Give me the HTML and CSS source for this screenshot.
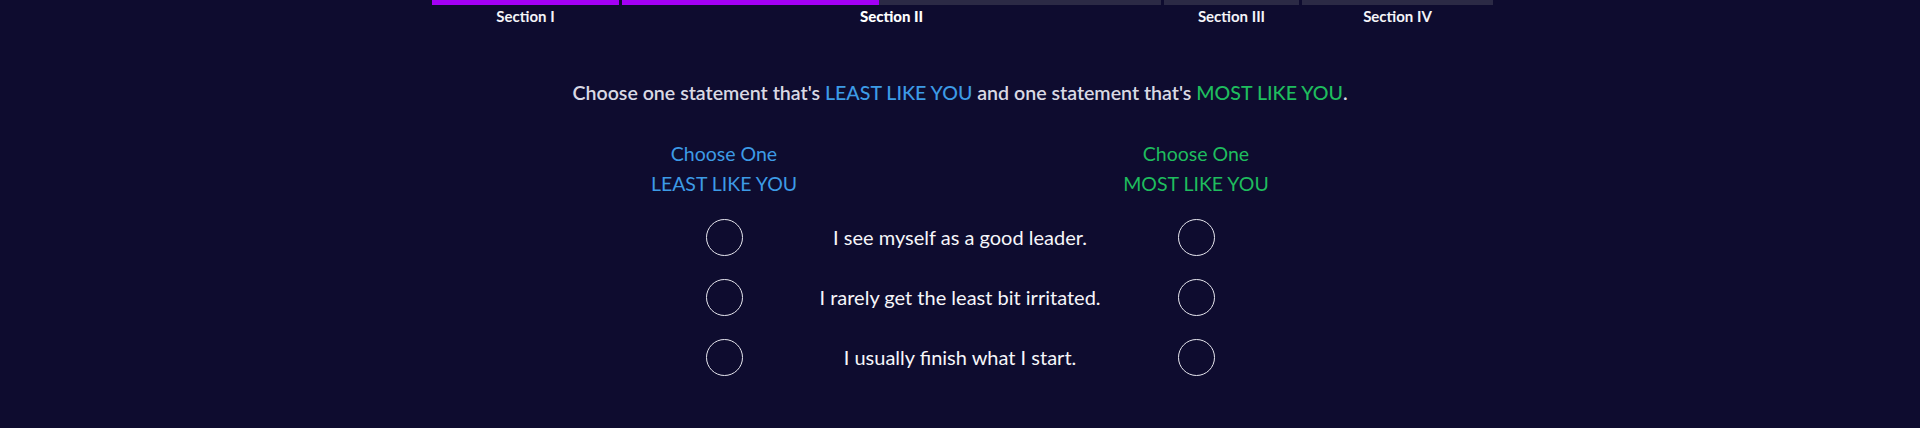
FILE: index.html
```html
<!DOCTYPE html>
<html>
<head>
<meta charset="utf-8">
<link rel="stylesheet" href="styles.css">
</head>
<body>
<div class="progress">
  <div class="seg"><div class="track"><div class="fill" style="width:100%"></div></div><div class="label">Section I</div></div>
  <div class="seg"><div class="track"><div class="fill" style="width:47.7%"></div></div><div class="label current">Section II</div></div>
  <div class="seg"><div class="track"></div><div class="label">Section III</div></div>
  <div class="seg"><div class="track"></div><div class="label">Section IV</div></div>
</div>

<p class="instruction">Choose one statement that's <span class="least">LEAST LIKE YOU</span> and one statement that's <span class="most">MOST LIKE YOU</span>.</p>

<div class="choices">
  <div class="head least">Choose One<br>LEAST LIKE YOU</div>
  <div class="head"></div>
  <div class="head most">Choose One<br>MOST LIKE YOU</div>

  <div class="cell"><span class="radio"></span></div>
  <div class="cell statement">I see myself as a good leader.</div>
  <div class="cell"><span class="radio"></span></div>

  <div class="cell"><span class="radio"></span></div>
  <div class="cell statement">I rarely get the least bit irritated.</div>
  <div class="cell"><span class="radio"></span></div>

  <div class="cell"><span class="radio"></span></div>
  <div class="cell statement">I usually finish what I start.</div>
  <div class="cell"><span class="radio"></span></div>
</div>
</body>
</html>
```

FILE: styles.css
```css
html, body {
  margin: 0;
  padding: 0;
  background: #0e0c2f;
  height: 100%;
}
body {
  font-family: Lato, "Open Sans", sans-serif;
  color: #fff;
}
.progress {
  display: grid;
  grid-template-columns: 187fr 539fr 135fr 191fr;
  column-gap: 3px;
  width: 1061px;
  margin-left: 432px;
}
.track {
  height: 5px;
  background: #2b2a45;
  position: relative;
}
.fill {
  height: 100%;
  background: #a300f5;
}
.label {
  text-align: center;
  font-size: 15px;
  font-weight: 700;
  margin-top: 3px;
  line-height: 16px;
  color: #f4f4f8;
}
.label.current {
  font-weight: 900;
  color: #fff;
}
.instruction {
  margin: 0;
  padding-top: 57px;
  text-align: center;
  font-size: 19.6px;
  font-weight: 600;
  line-height: 24px;
  color: #d9d9e4;
}
.least { color: #3d9be6; font-weight: 400; }
.most { color: #1fbd5e; font-weight: 400; }
.instruction .least, .instruction .most { font-weight: 500; }
.choices {
  display: grid;
  grid-template-columns: 200px 272px 200px;
  width: 672px;
  margin: 34px 0 0 624px;
  grid-auto-rows: 60px;
  grid-template-rows: 68px;
}
.head {
  text-align: center;
  font-size: 19.5px;
  line-height: 30px;
}
.cell {
  display: flex;
  align-items: center;
  justify-content: center;
}
.radio {
  width: 37px;
  height: 37px;
  border: 1.3px solid #e6e6ee;
  border-radius: 50%;
  box-sizing: border-box;
}
.statement {
  font-size: 20px;
  color: #f6f6fa;
  white-space: nowrap;
}
```
